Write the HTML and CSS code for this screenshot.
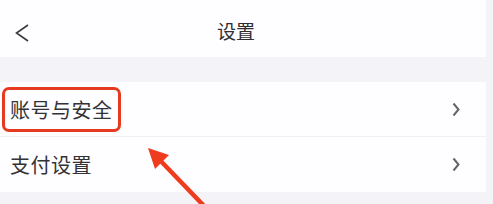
FILE: index.html
```html
<!DOCTYPE html>
<html lang="zh-CN">
<head>
	<meta charset="UTF-8">
	<title>设置</title>
	<link rel="stylesheet" href="styles.css">
</head>
<body>
	<div class="page">
		<div class="header">
			<div class="back">
				<svg width="15" height="18" viewBox="0 0 15 18">
					<polyline points="13,1 1.5,9 13,17" fill="none" stroke="#3a3a3c" stroke-width="1.6"/>
				</svg>
			</div>
			<div class="title">设置</div>
			<div class="spacer"></div>
		</div>
		<div class="list">
			<div class="row">
				<span class="label">账号与安全</span>
				<svg class="more" width="8" height="15" viewBox="0 0 8 15">
					<polyline points="1.5,1.5 6.5,7.5 1.5,13.5" fill="none" stroke="#636368" stroke-width="2"/>
				</svg>
			</div>
			<div class="row">
				<span class="label">支付设置</span>
				<svg class="more" width="8" height="15" viewBox="0 0 8 15">
					<polyline points="1.5,1.5 6.5,7.5 1.5,13.5" fill="none" stroke="#636368" stroke-width="2"/>
				</svg>
			</div>
		</div>
	</div>

	<div class="mark"></div>
	<svg class="arrow" width="493" height="204" viewBox="0 0 493 204">
		<line x1="206" y1="208" x2="154" y2="154" stroke="#ef3b1e" stroke-width="4.5"/>
		<polygon points="148,148 169,155 155,169" fill="#ef3b1e"/>
	</svg>
</body>
</html>
```

FILE: styles.css
```css
html, body {
	margin: 0;
	padding: 0;
	width: 100%;
	height: 100%;
	background: #f4f3f7;
}
body {
	font-family: "Noto Sans CJK SC", "Noto Sans", sans-serif;
	color: #333333;
	position: relative;
	overflow: hidden;
}
.page {
	margin-right: 7px;
}
.header {
	height: 57px;
	background: #fefdff;
	display: flex;
	align-items: center;
}
.back {
	width: 44px;
	padding-left: 15px;
	padding-top: 8px;
	box-sizing: border-box;
	display: flex;
	align-items: center;
}
.title {
	flex: 1;
	text-align: center;
	font-size: 19px;
	color: #2e2e30;
	padding-top: 4px;
}
.spacer {
	width: 58px;
}
.list {
	margin-top: 25px;
	background: #fefdff;
}
.row {
	height: 54px;
	display: flex;
	align-items: center;
	justify-content: space-between;
	padding: 0 26px 0 10px;
}
.row + .row {
	border-top: 1px solid #f0eff3;
	height: 55px;
}
.label {
	font-size: 20px;
	color: #333335;
	letter-spacing: 0.5px;
}
.more {
	display: block;
}
.mark {
	position: absolute;
	left: 2px;
	top: 87px;
	width: 113px;
	height: 39px;
	border: 3px solid #e53a1f;
	border-radius: 7px;
}
.arrow {
	position: absolute;
	left: 0;
	top: 0;
}
```
